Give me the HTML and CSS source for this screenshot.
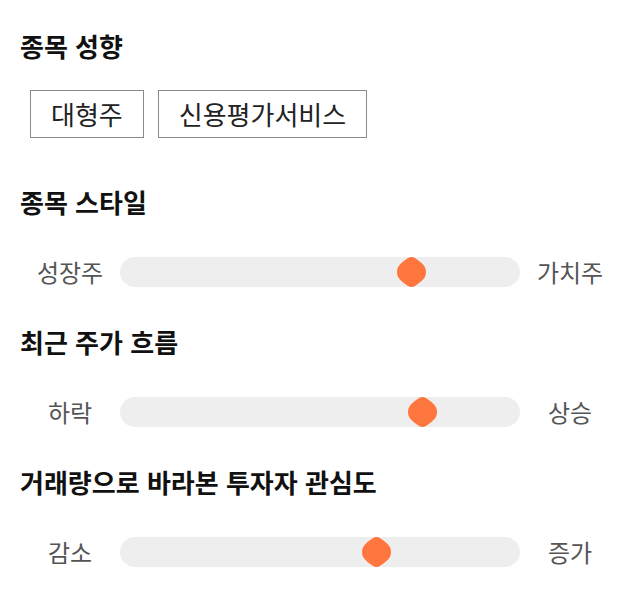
FILE: index.html
```html
<!DOCTYPE html>
<html lang="ko">
<head>
<meta charset="utf-8">
<title>종목 성향</title>
<link rel="stylesheet" href="styles.css">
</head>
<body>
<main class="page">
  <section class="section section-tags">
    <h2 class="title">종목 성향</h2>
    <div class="tags">
      <span class="tag">대형주</span>
      <span class="tag">신용평가서비스</span>
    </div>
  </section>

  <section class="section section-slider">
    <h2 class="title">종목 스타일</h2>
    <div class="scale">
      <span class="scale-label">성장주</span>
      <div class="track">
        <svg class="thumb" style="left: 72.75%" viewBox="0 0 29 30" width="29" height="30" aria-hidden="true"><path d="M14.5 0 C17 0 20 2 24 5.5 C27.5 8.5 29 11 29 15 C29 19 27.5 21.5 24 24.5 C20 28 17 30 14.5 30 C12 30 9 28 5 24.5 C1.5 21.5 0 19 0 15 C0 11 1.5 8.5 5 5.5 C9 2 12 0 14.5 0 Z"/></svg>
      </div>
      <span class="scale-label">가치주</span>
    </div>
  </section>

  <section class="section section-slider">
    <h2 class="title">최근 주가 흐름</h2>
    <div class="scale">
      <span class="scale-label">하락</span>
      <div class="track">
        <svg class="thumb" style="left: 75.5%" viewBox="0 0 29 30" width="29" height="30" aria-hidden="true"><path d="M14.5 0 C17 0 20 2 24 5.5 C27.5 8.5 29 11 29 15 C29 19 27.5 21.5 24 24.5 C20 28 17 30 14.5 30 C12 30 9 28 5 24.5 C1.5 21.5 0 19 0 15 C0 11 1.5 8.5 5 5.5 C9 2 12 0 14.5 0 Z"/></svg>
      </div>
      <span class="scale-label">상승</span>
    </div>
  </section>

  <section class="section section-slider">
    <h2 class="title">거래량으로 바라본 투자자 관심도</h2>
    <div class="scale">
      <span class="scale-label">감소</span>
      <div class="track">
        <svg class="thumb" style="left: 64%" viewBox="0 0 29 30" width="29" height="30" aria-hidden="true"><path d="M14.5 0 C17 0 20 2 24 5.5 C27.5 8.5 29 11 29 15 C29 19 27.5 21.5 24 24.5 C20 28 17 30 14.5 30 C12 30 9 28 5 24.5 C1.5 21.5 0 19 0 15 C0 11 1.5 8.5 5 5.5 C9 2 12 0 14.5 0 Z"/></svg>
      </div>
      <span class="scale-label">증가</span>
    </div>
  </section>
</main>
</body>
</html>
```

FILE: styles.css
```css
* {
  box-sizing: border-box;
}

body {
  margin: 0;
  background: #ffffff;
  color: #111111;
  font-family: "Noto Sans CJK KR", "Noto Sans", sans-serif;
}

.page {
  padding: 28px 20px 0 20px;
  display: flex;
  flex-direction: column;
}

.title {
  margin: 0;
  font-size: 26px;
  font-weight: 700;
  line-height: 36px;
  color: #111111;
}

.section-tags {
  margin-bottom: 46px;
}

.section-slider {
  margin-bottom: 37px;
}

.tags {
  margin-top: 26px;
  padding-left: 10px;
  display: flex;
  gap: 14px;
}

.tag {
  display: inline-block;
  height: 48px;
  line-height: 46px;
  padding: 0 20px;
  border: 1px solid #8a8a8a;
  font-size: 26px;
  color: #222222;
}

.scale {
  margin-top: 37px;
  display: flex;
  align-items: center;
  height: 30px;
}

.scale-label {
  width: 100px;
  flex: none;
  text-align: center;
  font-size: 24px;
  line-height: 30px;
  color: #555555;
}

.track {
  position: relative;
  flex: 1;
  height: 30px;
  background: #eeeeee;
  border-radius: 15px;
}

.thumb {
  position: absolute;
  top: 0;
  margin-left: -14.5px;
  fill: #ff763f;
  display: block;
}
```
